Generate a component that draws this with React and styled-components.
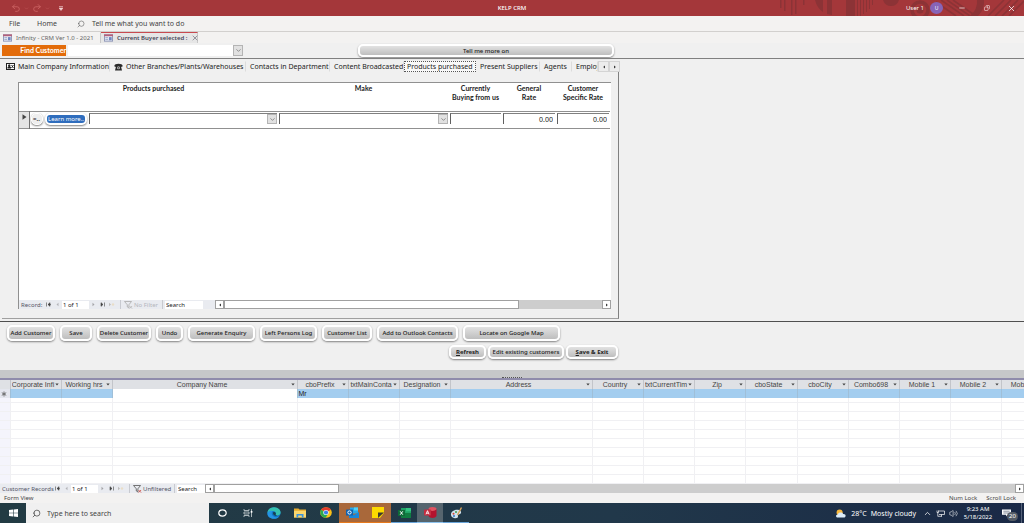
import React from 'react';
import styled, { createGlobalStyle } from 'styled-components';
import { Undo2, Redo2, Search, X, Minus, Copy, ChevronDown, ChevronUp, Volume2 } from 'lucide-react';

const columns = [
  { name: 'Corporate Infi', width: 51 },
  { name: 'Working hrs', width: 51 },
  { name: 'Company Name', width: 185, editing: true },
  { name: 'cboPrefix', width: 51, value: 'Mr' },
  { name: 'txtMainConta', width: 51 },
  { name: 'Designation', width: 51 },
  { name: 'Address', width: 142 },
  { name: 'Country', width: 51 },
  { name: 'txtCurrentTim', width: 51 },
  { name: 'Zip', width: 51 },
  { name: 'cboState', width: 52 },
  { name: 'cboCity', width: 51 },
  { name: 'Combo698', width: 51 },
  { name: 'Mobile 1', width: 51 },
  { name: 'Mobile 2', width: 51 },
  { name: 'Mobile 3', width: 51 },
];

const actions = [
  { label: 'Add Customer', width: 48 },
  { label: 'Save', width: 32 },
  { label: 'Delete Customer', width: 54 },
  { label: 'Undo', width: 27 },
  { label: 'Generate Enquiry', width: 67 },
  { label: 'Left Persons Log', width: 57 },
  { label: 'Customer List', width: 50 },
  { label: 'Add to Outlook Contacts', width: 81 },
  { label: 'Locate on Google Map', width: 97 },
];

const blankRows = Array.from({ length: 10 }, (_, i) => i);

const FormIcon = () => (
  <svg width="9" height="8" viewBox="0 0 10 8" aria-hidden="true">
    <rect x="0.5" y="0.5" width="9" height="7" fill="#e8ecf6" stroke="#8a93b5" />
    <rect x="0" y="0" width="10" height="2" fill="#b4607b" />
    <rect x="1.5" y="3" width="3" height="1.2" fill="#a5b0d0" />
    <rect x="1.5" y="5" width="3" height="1.2" fill="#a5b0d0" />
    <rect x="5.5" y="3" width="3" height="3.5" fill="#6f86c0" />
  </svg>
);

const CardIcon = () => (
  <svg width="9" height="7" viewBox="0 0 9 7" aria-hidden="true">
    <rect x="0.5" y="0.5" width="8" height="6" fill="#fff" stroke="#222" />
    <path d="M1.500 5.500V4.200L2.500 3.500a1.200 1.200 0 1 1 1.500 0l1 0.700v1.300z" fill="#222" />
    <path d="M5.500 2l2 3M7.500 2l-2 3" stroke="#222" strokeWidth="0.9" />
  </svg>
);

const PhoneIcon = () => (
  <svg width="9" height="8" viewBox="0 0 9 8" aria-hidden="true">
    <path d="M0.3 3.200C0.3 0 8.700 0 8.700 3.200L7.500 4 7 3.500l1 4H1l1-4L1.500 4z" fill="#2a2a2a" />
    <circle cx="4.5" cy="4.800" r="1.500" fill="#bbb" />
    <circle cx="4.5" cy="4.800" r="0.600" fill="#222" />
  </svg>
);

const Filter = ({ active }) => (
  <svg width="9" height="8" viewBox="0 0 9 8" aria-hidden="true">
    <path d="M0.5 0.5h7L4.9 3.8V7L3.3 6V3.8z" fill="none" stroke={active ? '#555' : '#aaa'} strokeWidth="0.8" />
    <path d="M5.5 5l2.6 2.6M8.1 5L5.5 7.6" stroke={active ? '#d0574f' : '#bbb'} strokeWidth="0.9" />
  </svg>
);

const NavGlyph = ({ type }) => (
  <svg width="7" height="5" viewBox="0 0 7 5" aria-hidden="true">
    {type === 'first' && <path d="M1.5 0.5v4M3 2.5h3M5 0.7L3 2.5l2 1.8z" stroke="#444" fill="#444" strokeWidth="0.6" />}
    {type === 'prev' && <path d="M4.5 0.7L2.5 2.5l2 1.8z" fill="#b4b4b8" />}
    {type === 'next' && <path d="M2.5 0.7l2 1.8-2 1.8z" fill="#a4a4a8" />}
    {type === 'last' && <path d="M5.5 0.5v4M2 0.7l2 1.8-2 1.8z" stroke="#444" fill="#444" strokeWidth="0.6" />}
    {type === 'new' && (
      <>
        <path d="M1 0.7l2 1.8-2 1.8z" fill="#bbb" />
        <circle cx="5" cy="2.5" r="1.2" fill="#e9ddc8" />
      </>
    )}
  </svg>
);

const Arrow = ({ left }) => (
  <svg width="4" height="4" viewBox="0 0 4 4" aria-hidden="true">
    <path d={left ? 'M3 0.4L1.2 2l1.8 1.6z' : 'M1 0.4L2.8 2 1 3.6z'} fill="#333" />
  </svg>
);

const RowMarker = () => (
  <svg width="5" height="6" viewBox="0 0 5 6" aria-hidden="true">
    <path d="M0.500 0.200L4.500 3 0.500 5.800z" fill="#444" />
  </svg>
);

const Circuit = () => (
  <svg width="248" height="16" viewBox="0 0 248 16" aria-hidden="true">
    <g fill="#8c3336">
      <rect x="4" width="1.5" height="8" />
      <rect x="8" width="1.5" height="11" />
      <rect x="15" width="1.5" height="15" />
      <rect x="19" width="1.5" height="14" />
      <rect x="27" width="1.5" height="5" />
      <path d="M39 0h8v12q-6-4-8-12zM51 0h5v15l-5-1zM70 0h9v16h-9zM81 0h1v16h-1zM84 0h1v16h-1zM87 0h1v14h-1zM90 0h1v12h-1zM93 0h1v9h-1zM96 0h1v5h-1z" />
      <path d="M107 0h16q-2 6-8 6t-8-6z" />
      <circle cx="144" cy="10" r="3.5" />
      <path d="M201 0h7q1 9-6 16h-8q8-7 7-16z" />
    </g>
    <circle cx="144" cy="10" r="8" fill="none" stroke="#8c3336" strokeWidth="3.5" />
    <path d="M160 2l20 14M165 0l23 16M171 0l23 16M177 0l20 14M212 16l16-16M219 16l16-16M226 16l16-16M233 16l15-15" stroke="#8c3336" strokeWidth="1.6" />
  </svg>
);

const RecordNav = ({ label, filter, filtered, labelWidth }) => (
  <Navigator>
    <NavLabel $width={labelWidth}>{label}</NavLabel>
    <NavButton aria-label="First record"><NavGlyph type="first" /></NavButton>
    <NavButton aria-label="Previous record"><NavGlyph type="prev" /></NavButton>
    <NavInput aria-label="Current record" defaultValue="1 of 1" $width={27} />
    <NavButton aria-label="Next record"><NavGlyph type="next" /></NavButton>
    <NavButton aria-label="Last record"><NavGlyph type="last" /></NavButton>
    <NavButton aria-label="New record"><NavGlyph type="new" /></NavButton>
    <FilterButton $active={filtered}>
      <Filter active={filtered} />
      {filter}
    </FilterButton>
    <NavInput aria-label="Search records" defaultValue="Search" $width={filtered ? 28 : 38} />
  </Navigator>
);

const ScrollBar = ({ thumb }) => (
  <Track>
    <ScrollButton aria-label="Scroll left"><Arrow left /></ScrollButton>
    <Thumb $width={thumb} />
    <Spacer />
    <ScrollButton aria-label="Scroll right"><Arrow /></ScrollButton>
  </Track>
);

const Dropdown = ({ label, width }) => (
  <Combo $width={width}>
    <Select aria-label={label} defaultValue="">
      <option value=""></option>
    </Select>
    <ComboArrow><ChevronDown size={7} /></ComboArrow>
  </Combo>
);

const App = () => {
  return (
    <Window>
      <GlobalStyle />
      <TitleBar>
        <QuickAccess>
          <Undo2 size={10} color="#cc6464" />
          <ChevronDown size={5} color="#cc6464" />
          <Redo2 size={10} color="#cc6464" />
          <ChevronDown size={5} color="#cc6464" />
          <QuickMore>
            <svg width="4" height="5" viewBox="0 0 4 5"><path d="M0 0.500h4M0 2h4L2 4.500z" fill="#f0d0d0" stroke="#f0d0d0" strokeWidth="0.600" /></svg>
          </QuickMore>
        </QuickAccess>
        <AppName>KELP CRM</AppName>
        <TitleRight>
          <Pattern><Circuit /></Pattern>
          <User>User 1</User>
          <Avatar>U</Avatar>
          <WindowButton aria-label="Minimize"><Minus size={8} /></WindowButton>
          <WindowButton aria-label="Restore"><Flipped><Copy size={6} /></Flipped></WindowButton>
          <WindowButton aria-label="Close"><X size={9} /></WindowButton>
        </TitleRight>
      </TitleBar>

      <Ribbon>
        <RibbonTab $width={28}>File</RibbonTab>
        <RibbonTab $width={36}>Home</RibbonTab>
        <TellMe>
          <Flipped><Search size={8} strokeWidth={1.5} /></Flipped>
          <span>Tell me what you want to do</span>
        </TellMe>
      </Ribbon>

      <DocTabs>
        <DocTab $width={101}>
          <FormIcon />
          Infinity - CRM Ver 1.0 - 2021
        </DocTab>
        <DocTab $width={97} $active>
          <FormIcon />
          Current Buyer selected :
          <X size={8} strokeWidth={1.5} />
        </DocTab>
      </DocTabs>

      <FindRow>
        <FindLabel>Find Customer</FindLabel>
        <Dropdown label="Find Customer" width={175} />
        <TellMore>Tell me more on</TellMore>
      </FindRow>

      <Pages>
        <TabStrip>
          <PageTab $width={108}><CardIcon />Main Company Information</PageTab>
          <PageTab $width={136}><PhoneIcon />Other Branches/Plants/Warehouses</PageTab>
          <PageTab $width={84}>Contacts in Department</PageTab>
          <PageTab $width={74}>Content Broadcasted</PageTab>
          <PageTab $width={72} $active>Products purchased</PageTab>
          <PageTab $width={64}>Present Suppliers</PageTab>
          <PageTab $width={32}>Agents</PageTab>
          <PageTab $width={26}>Employees</PageTab>
          <TabScroll aria-label="Previous tabs"><Arrow left /></TabScroll>
          <TabScroll aria-label="Next tabs"><Arrow /></TabScroll>
        </TabStrip>
        <Page>
          <Subform>
            <ProductTable>
              <colgroup>
                <Col $width={10} />
                <Col $width={15} />
                <Col $width={44} />
                <Col $width={190} />
                <Col $width={171} />
                <Col $width={53} />
                <Col $width={54} />
                <Col $width={54} />
              </colgroup>
              <thead>
                <tr>
                  <ProductHead />
                  <ProductHead colSpan={3}>Products purchased</ProductHead>
                  <ProductHead>Make</ProductHead>
                  <ProductHead>Currently<br />Buying from us</ProductHead>
                  <ProductHead>General<br />Rate</ProductHead>
                  <ProductHead>Customer<br />Specific Rate</ProductHead>
                </tr>
              </thead>
              <tbody>
                <ProductRow>
                  <Selector><RowMarker /></Selector>
                  <td><TinyButton>=..</TinyButton></td>
                  <td><LearnMore>Learn more..</LearnMore></td>
                  <td><Dropdown label="Product purchased" /></td>
                  <td><Dropdown label="Make" /></td>
                  <td><Field aria-label="Currently buying from us" /></td>
                  <td><Field aria-label="General rate" defaultValue="0.00" /></td>
                  <td><Field aria-label="Customer specific rate" defaultValue="0.00" /></td>
                </ProductRow>
              </tbody>
            </ProductTable>
            <Spacer />
            <NavRow>
              <RecordNav label="Record:" labelWidth={25} filter="No Filter" />
              <NavGap />
              <ScrollBar thumb={295} />
            </NavRow>
          </Subform>
        </Page>
      </Pages>

      <Footer>
        <ActionRow>
          {actions.map((a) => (
            <FormButton key={a.label} $width={a.width}>{a.label}</FormButton>
          ))}
        </ActionRow>
        <ExitRow>
          <FormButton $width={37} $bold><span><u>R</u>efresh</span></FormButton>
          <FormButton $width={76}>Edit existing customers</FormButton>
          <FormButton $width={52} $bold><span><u>S</u>ave &amp; Exit</span></FormButton>
        </ExitRow>
      </Footer>

      <Splitter><Grip /></Splitter>

      <Datasheet>
        <Grid>
          <colgroup>
            <Col $width={10} />
            {columns.map((c) => <Col key={c.name} $width={c.width} />)}
          </colgroup>
          <thead>
            <tr>
              <GridHead />
              {columns.map((c) => (
                <GridHead key={c.name}>
                  <HeadInner>
                    <HeadText>{c.name}</HeadText>
                    <svg width="4" height="3" viewBox="0 0 4 3" aria-hidden="true"><path d="M0.300 0.500h3.400L2 2.500z" fill="#444" /></svg>
                  </HeadInner>
                </GridHead>
              ))}
            </tr>
          </thead>
          <tbody>
            <tr>
              <NewCell $selector>
                <svg width="6" height="6" viewBox="0 0 6 6" aria-label="New record"><path d="M3 0.500v5M0.800 1.700l4.400 2.600M5.200 1.700L0.800 4.300" stroke="#666" strokeWidth="0.900" /></svg>
              </NewCell>
              {columns.map((c) => (
                <NewCell key={c.name} $editing={c.editing}>{c.value}</NewCell>
              ))}
            </tr>
            {blankRows.map((r) => (
              <tr key={r}>
                <BlankCell $selector />
                {columns.map((c) => <BlankCell key={c.name} />)}
              </tr>
            ))}
          </tbody>
        </Grid>
      </Datasheet>
      <NavRow>
        <RecordNav label="Customer Records" labelWidth={53} filter="Unfiltered" filtered />
        <ScrollBar thumb={125} />
      </NavRow>

      <StatusBar>
        <span>Form View</span>
        <Spacer />
        <span>Num Lock</span>
        <span>Scroll Lock</span>
      </StatusBar>

      <Taskbar>
        <TaskButton aria-label="Start">
          <svg width="9" height="8" viewBox="0 0 9 8"><path d="M0 1l4-0.6v3.3H0zM4.6 0.4L9 0v3.7H4.6zM0 4.3h4v3.3L0 7zM4.6 4.3H9V8l-4.4-0.4z" fill="#fff" /></svg>
        </TaskButton>
        <TaskSearch>
          <Flipped><Search size={9} strokeWidth={2} /></Flipped>
          <TaskInput aria-label="Search" placeholder="Type here to search" />
        </TaskSearch>
        <TaskButton aria-label="Cortana">
          <svg width="9" height="8" viewBox="0 0 9 8"><ellipse cx="4.500" cy="4" rx="3.700" ry="3.200" fill="none" stroke="#fff" strokeWidth="1.2" /></svg>
        </TaskButton>
        <TaskButton aria-label="Task view">
          <svg width="10" height="8" viewBox="0 0 10 8">
            <path d="M1 0v1.5h5V0M1 8V6.5h5V8M1 3h5v2H1zM8.5 0v8" fill="none" stroke="#ccd3d6" strokeWidth="0.8" />
            <rect x="7.7" y="2" width="1.7" height="1.7" fill="#fff" />
          </svg>
        </TaskButton>
        <TaskButton aria-label="Edge">
          <svg width="14" height="12" viewBox="0 0 14 12">
            <ellipse cx="7" cy="6" rx="6.6" ry="5.8" fill="#1173c7" />
            <path d="M0.4 6C0.6 2.5 3.5 0.2 7 0.2c4 0 6.6 2.6 6.6 5.3 0 2-1.8 3-3.6 3-1.4 0-1.9-0.5-1.2-1.4C9.600 5.500 8 3.900 6 3.900 3.500 3.900 1.300 4.600 0.400 6z" fill="#35c1b0" />
            <path d="M0.4 6.500C0.700 4 4 3.200 5.800 4.200 4 5 4.200 9 8 10c2 0.500 3.800 0 4.600-1-1.400 2.400-4.200 3-6 2.800C3 11.600 0.300 9.500 0.400 6.500z" fill="#2494e4" />
            <path d="M6.200 5.200c1.600-0.800 3 0.400 2.600 1.900-0.600 0.900 0.200 1.400 1.500 1.500-2 0.800-5-1-4.100-3.400z" fill="#17404f" />
          </svg>
        </TaskButton>
        <TaskButton aria-label="File Explorer">
          <svg width="12" height="10" viewBox="0 0 12 10">
            <path d="M0 0.500h4.500l1 1H12V9.500H0z" fill="#e8ab2e" />
            <path d="M0 2.800h12v6.700H0z" fill="#fbd66d" />
            <path d="M2.500 9.500V6h7v3.500H7.800V7.500H4.200v2z" fill="#3b92dc" />
          </svg>
        </TaskButton>
        <TaskButton aria-label="Chrome">
          <svg width="12" height="11" viewBox="0 0 12 11">
            <ellipse cx="6" cy="5.500" rx="5.800" ry="5.300" fill="#fbc116" />
            <path d="M6 5.500L1 2.800C3-0.500 9-0.500 11 2.800z" fill="#e33b2e" />
            <path d="M6 5.500L1 2.800C-0.800 6 1 10.300 5.500 10.800L8.500 6.500z" fill="#2da94f" />
            <ellipse cx="6" cy="5.500" rx="2.700" ry="2.500" fill="#fff" />
            <ellipse cx="6" cy="5.500" rx="2.100" ry="1.900" fill="#3c7de6" />
          </svg>
        </TaskButton>
        <TaskButton aria-label="Outlook" $bg="#a9683a" $line="#e77a1d">
          <svg width="13" height="11" viewBox="0 0 13 11">
            <rect x="4" y="0.500" width="8" height="6" fill="#28a8ea" />
            <rect x="8" y="0.500" width="4" height="3" fill="#50d0f5" />
            <path d="M3 5l5 3 5-3v6H3z" fill="#1a86d9" />
            <rect x="0" y="2.500" width="7" height="6" rx="0.600" fill="#0f62b0" />
            <ellipse cx="3.500" cy="5.500" rx="1.700" ry="1.600" fill="none" stroke="#fff" />
          </svg>
        </TaskButton>
        <TaskButton aria-label="Sticky Notes" $bg="#a9683a" $line="#e77a1d">
          <svg width="12" height="11" viewBox="0 0 12 11">
            <path d="M0 0h12v6L8 11H0z" fill="#fdd900" />
            <path d="M6 5.500h6L6 11z" fill="#3d3a2e" />
          </svg>
        </TaskButton>
        <TaskButton aria-label="Excel" $line="#6aa5da">
          <svg width="13" height="10" viewBox="0 0 13 10">
            <rect x="3" width="10" height="10" fill="#21a366" />
            <path d="M8 0h5v3.300H8z" fill="#33c481" />
            <path d="M3 5h10v5H3z" fill="#107c41" />
            <rect y="2" width="7" height="6" fill="#0e6b38" />
            <path d="M2.200 3.300l2.600 3.400M4.800 3.300L2.200 6.700" stroke="#fff" />
          </svg>
        </TaskButton>
        <TaskButton aria-label="Access" $bg="#56656e" $line="#8ec3ee">
          <svg width="13" height="11" viewBox="0 0 13 11">
            <ellipse cx="8.500" cy="2" rx="4" ry="2" fill="#e05461" />
            <path d="M4.500 2c1 2.500 7 2.500 8 0v7c-1 2.500-7 2.500-8 0z" fill="#b3122e" />
            <rect y="2.500" width="7" height="6" rx="0.600" fill="#c42d40" />
            <path d="M2 7.300l1.500-3.600L5 7.300M2.600 6.200h1.800" fill="none" stroke="#fff" strokeWidth="0.900" />
          </svg>
        </TaskButton>
        <TaskButton aria-label="Paint" $line="#6aa5da">
          <svg width="13" height="12" viewBox="0 0 13 12">
            <path d="M1 8C0.500 4.500 5 1.800 9 3c3 1 2.500 4 0.500 4.200-1.500 0.200-1.800 0.800-1.500 2C8.300 11 6 11.500 4 11 2.300 10.500 1.200 9.500 1 8z" fill="#cfe3ef" />
            <circle cx="3.500" cy="6.800" r="1" fill="#d9483b" />
            <circle cx="6" cy="5" r="1" fill="#3b9a52" />
            <circle cx="4" cy="9" r="1" fill="#3576c4" />
            <path d="M11.500 0.500L7.500 8" stroke="#dba45b" strokeWidth="1.400" />
          </svg>
        </TaskButton>
        <Spacer />
        <Tray>
          <svg width="12" height="9" viewBox="0 0 13 9" aria-hidden="true">
            <circle cx="5" cy="3.500" r="3.300" fill="#f9b93e" />
            <path d="M3 8.800C0.500 8.800 0.500 5.500 3 5.500 3.800 2.800 8 2.800 8.800 5c3.500-0.400 3.500 3.800 0.700 3.800z" fill="#dcecf9" />
          </svg>
          <Weather>28°C</Weather>
          <Weather>Mostly cloudy</Weather>
          <TrayIcons>
            <ChevronUp size={9} />
            <svg width="9" height="7" viewBox="0 0 9 7" aria-hidden="true">
              <path d="M2.500 1h6v3.500H3M1 0.500v2h1.500v-2M1.800 2.500v3.800H6M5.500 4.500v1.800" fill="none" stroke="#fff" strokeWidth="0.700" />
            </svg>
            <Volume2 size={9} strokeWidth={1.5} />
          </TrayIcons>
          <Clock>
            <span>9:23 AM</span>
            <span>5/18/2022</span>
          </Clock>
          <Notice aria-label="20 notifications">
            <svg width="9" height="8" viewBox="0 0 10 8" aria-hidden="true">
              <path d="M0 0h10v6H6L4.500 8V6H0z" fill="#fff" />
              <path d="M1.500 2h7M1.500 4h7" stroke="#1a2b45" strokeWidth="0.600" />
            </svg>
            <Count>20</Count>
          </Notice>
        </Tray>
      </Taskbar>
    </Window>
  );
};

export default App;

const GlobalStyle = createGlobalStyle`
  * {
    box-sizing: border-box;
  }
  body {
    margin: 0;
    background: #f0f0f0;
    color: #222222;
    font-family: "Noto Sans", "Open Sans", sans-serif;
    font-size: 7px;
    line-height: 9px;
  }
  button, input, select {
    font: inherit;
    color: inherit;
    margin: 0;
    padding: 0;
    border: 0;
    background: none;
    border-radius: 0;
  }
  svg {
    flex: none;
    display: block;
  }
`;

const Window = styled.div`
  display: flex;
  flex-direction: column;
  min-height: 100vh;
  overflow: hidden;
`;

const Spacer = styled.div`
  flex: 1;
`;

const TitleBar = styled.header`
  height: 16px;
  display: grid;
  grid-template-columns: 1fr auto 1fr;
  align-items: center;
  background: #a4373a;
  color: #ffffff;
  font-size: 6px;
`;

const QuickAccess = styled.div`
  display: flex;
  align-items: center;
  gap: 3px;
  padding-left: 11px;
`;

const QuickMore = styled.span`
  margin-left: 6px;
`;

const AppName = styled.span`
  font-weight: 500;
`;

const TitleRight = styled.div`
  position: relative;
  height: 16px;
  display: flex;
  align-items: center;
  justify-content: flex-end;
`;

const Pattern = styled.div`
  position: absolute;
  top: 0;
  right: 0;
`;

const User = styled.span`
  position: relative;
  margin-right: 6px;
`;

const Avatar = styled.span`
  position: relative;
  width: 13px;
  height: 12px;
  border-radius: 50%;
  background: #8764b8;
  font-size: 5px;
  line-height: 12px;
  text-align: center;
  margin-right: 6px;
`;

const WindowButton = styled.button`
  position: relative;
  width: 25px;
  height: 16px;
  display: flex;
  align-items: center;
  justify-content: center;
`;

const Ribbon = styled.nav`
  height: 16px;
  display: flex;
  align-items: center;
  background: #f3f2f1;
  border-bottom: 1px solid #d2d0ce;
  color: #444444;
  padding-left: 9px;
`;

const RibbonTab = styled.button`
  width: ${(p) => p.$width}px;
  text-align: left;
`;

const TellMe = styled.button`
  display: flex;
  align-items: center;
  gap: 7px;
  margin-left: 4px;
`;

const Flipped = styled.span`
  transform: scaleX(-1);
`;

const DocTabs = styled.div`
  height: 11px;
  display: flex;
  background: #f3f2f1;
  font-size: 6px;
`;

const DocTab = styled.button`
  width: ${(p) => p.$width}px;
  display: flex;
  align-items: center;
  gap: 4px;
  padding: 0 3px;
  white-space: nowrap;
  line-height: 8px;
  color: ${(p) => (p.$active ? '#444455' : '#666666')};
  font-weight: ${(p) => (p.$active ? 600 : 400)};
  background: ${(p) => (p.$active ? '#e6e6e6' : 'transparent')};
  border-top: ${(p) => (p.$active ? '1px solid #c84a50' : '1px solid transparent')};
  border-right: 1px solid #c8c8c8;
`;

const FindRow = styled.div`
  height: 15px;
  display: flex;
  align-items: center;
  gap: 2px;
  padding-left: 2px;
`;

const FindLabel = styled.span`
  width: 64px;
  height: 11px;
  background: #e36c0a;
  color: #ffffff;
  font-family: "Lato", sans-serif;
  font-weight: 700;
  line-height: 10px;
  text-align: right;
`;

const Combo = styled.span`
  display: flex;
  width: ${(p) => (p.$width ? p.$width + 'px' : 'auto')};
  height: 11px;
  background: #ffffff;
`;

const Select = styled.select`
  appearance: none;
  flex: 1;
  min-width: 0;
`;

const ComboArrow = styled.span`
  width: 10px;
  display: flex;
  align-items: center;
  justify-content: center;
  background: #e1e1e1;
  border: 1px solid #b4b4b4;
  color: #555555;
  pointer-events: none;
`;

const ShadowButton = styled.button`
  background: linear-gradient(#e2e2e2, #bebebe);
  border: 2px solid #ffffff;
  border-radius: 5px;
  box-shadow: 0 1px 2px #808080;
  font-size: 6px;
  font-weight: 500;
  line-height: 8px;
  white-space: nowrap;
`;

const TellMore = styled(ShadowButton)`
  width: 256px;
  height: 13px;
  margin-left: 113px;
`;

const Pages = styled.main`
  border-top: 1px solid #808080;
  border-bottom: 1px solid #505050;
  padding: 2px 0 2px 2px;
`;

const TabStrip = styled.div`
  display: flex;
  height: 11px;
`;

const PageTab = styled.button`
  width: ${(p) => p.$width}px;
  display: flex;
  align-items: center;
  gap: 3px;
  padding-left: 3px;
  overflow: hidden;
  white-space: nowrap;
  border: 1px solid transparent;
  border-right-color: #dcdcdc;
  ${(p) => p.$active && 'background: #f9f9f9; border: 1px dotted #555555; padding-left: 2px;'}
`;

const TabScroll = styled.button`
  width: 11px;
  display: flex;
  align-items: center;
  justify-content: center;
  background: #ececec;
  border: 1px solid #d4d4d4;
`;

const Page = styled.section`
  width: 617px;
  border-right: 1px solid #808080;
  border-bottom: 1px solid #a0a0a0;
  padding: 10px 7px 9px 16px;
`;

const Subform = styled.div`
  display: flex;
  flex-direction: column;
  min-height: 227px;
  background: #ffffff;
  border-top: 1px solid #909090;
  border-left: 1px solid #909090;
`;

const Col = styled.col`
  width: ${(p) => p.$width}px;
`;

const ProductTable = styled.table`
  width: 591px;
  table-layout: fixed;
  border-collapse: collapse;

  td {
    padding: 0 1px 2px;
    vertical-align: middle;
  }
`;

const ProductHead = styled.th`
  height: 28px;
  padding: 1px 0 0;
  vertical-align: top;
  font-family: "Lato", sans-serif;
  font-weight: 700;
  white-space: nowrap;
`;

const ProductRow = styled.tr`
  height: 17px;
  border-top: 1px solid #909090;
  border-bottom: 1px solid #909090;

  ${Combo}, input {
    border-top: 1px solid #808080;
    border-left: 1px solid #606060;
  }
`;

const Selector = styled.th`
  padding: 2px 0 0 3px;
  vertical-align: top;
  background: #e4e4e4;
  border-right: 1px solid #707070;
`;

const TinyButton = styled(ShadowButton)`
  display: block;
  width: 12px;
  height: 12px;
  border-width: 1px;
  background: #eeeeee;
  font-weight: 700;
`;

const LearnMore = styled(ShadowButton)`
  display: block;
  width: 42px;
  height: 12px;
  background: #2f6dbd;
  color: #ffffff;
  font-weight: 400;
`;

const Field = styled.input`
  display: block;
  width: 100%;
  height: 11px;
  padding-right: 2px;
  text-align: right;
`;

const NavRow = styled.div`
  display: flex;
  height: 9px;
  background: #e9ebf0;
`;

const NavGap = styled.div`
  width: 12px;
`;

const Navigator = styled.div`
  display: flex;
  align-items: center;
  font-size: 6px;
  line-height: 8px;
`;

const NavLabel = styled.span`
  width: ${(p) => p.$width}px;
  padding-left: 2px;
  color: #555566;
  white-space: nowrap;
`;

const NavButton = styled.button`
  width: 9px;
  height: 9px;
  display: flex;
  align-items: center;
  justify-content: center;
`;

const NavInput = styled.input`
  width: ${(p) => p.$width}px;
  height: 8px;
  padding-left: 1px;
  background: #ffffff;
`;

const FilterButton = styled.button`
  display: flex;
  align-items: center;
  width: ${(p) => (p.$active ? 46 : 43)}px;
  height: 9px;
  margin: 0 2px 0 4px;
  padding-left: 3px;
  gap: 1px;
  white-space: nowrap;
  color: ${(p) => (p.$active ? '#555566' : '#b4b6bc')};
  border-left: 1px solid #c8cad0;
  border-right: 1px solid #c8cad0;
`;

const Track = styled.div`
  flex: 1;
  display: flex;
  background: #cdcdcd;
`;

const ScrollButton = styled.button`
  width: 9px;
  display: flex;
  align-items: center;
  justify-content: center;
  background: #ffffff;
  border: 1px solid #a0a0a0;
`;

const Thumb = styled.div`
  width: ${(p) => p.$width}px;
  background: #ffffff;
  border: 1px solid #a0a0a0;
`;

const Footer = styled.section`
  height: 48px;
  padding-top: 3px;
`;

const ActionRow = styled.div`
  display: flex;
  gap: 5px;
  padding-left: 7px;
`;

const FormButton = styled(ShadowButton)`
  width: ${(p) => p.$width}px;
  height: 16px;
  font-weight: ${(p) => (p.$bold ? 700 : 500)};
`;

const ExitRow = styled.div`
  display: flex;
  gap: 2px;
  padding: 4px 0 0 449px;

  ${FormButton} {
    height: 14px;
  }
`;

const Splitter = styled.div`
  height: 10px;
  display: flex;
  align-items: flex-end;
  justify-content: center;
  background: #c6c7c9;
  border-bottom: 2px solid #8f8bab;
`;

const Grip = styled.span`
  width: 20px;
  border-top: 1px dotted #555555;
`;

const Datasheet = styled.div`
  flex: 1 0 104px;
  display: flex;
  overflow: hidden;
  background: #ffffff;
  font-family: "Liberation Sans", Arial, sans-serif;
`;

const Grid = styled.table`
  width: 1052px;
  flex: none;
  table-layout: fixed;
  border-collapse: collapse;
  line-height: 8px;
`;

const GridHead = styled.th`
  height: 9px;
  padding: 0;
  font-weight: 400;
  color: #444444;
  background: #dfe1e5;
  border-right: 1px solid #c3c5ca;
`;

const HeadInner = styled.span`
  display: flex;
  align-items: center;
  padding: 0 2px 0 1px;
`;

const HeadText = styled.span`
  flex: 1;
  overflow: hidden;
  white-space: nowrap;
`;

const NewCell = styled.td`
  height: 9px;
  padding: 0 1px;
  line-height: 8px;
  background: ${(p) => (p.$selector ? '#e4e6ee' : p.$editing ? '#ffffff' : '#a3cdef')};
  border-right: 1px solid #9fbfd8;
`;

const BlankCell = styled.td`
  padding: 0;
  background: ${(p) => (p.$selector ? '#f4f4fc' : '#ffffff')};
  border-right: 1px solid #f0f0f3;
  border-bottom: 1px solid #f0f0f3;
`;

const StatusBar = styled.footer`
  height: 10px;
  display: flex;
  align-items: center;
  gap: 9px;
  padding: 0 8px 0 4px;
  background: #f3f2f1;
  color: #444444;
  font-size: 6px;
`;

const Taskbar = styled.footer`
  height: 20px;
  display: flex;
  background: linear-gradient(90deg, #223b43, #21384a 60%, #1a2946);
  color: #ffffff;
`;

const TaskButton = styled.button`
  width: 26px;
  display: flex;
  align-items: center;
  justify-content: center;
  background: ${(p) => p.$bg || 'transparent'};
  border-bottom: 1px solid ${(p) => p.$line || 'transparent'};
`;

const TaskSearch = styled.label`
  width: 183px;
  display: flex;
  align-items: center;
  gap: 6px;
  padding-left: 6px;
  background: #f0f0f0;
  color: #444444;
`;

const TaskInput = styled.input`
  flex: 1;
  min-width: 0;

  &::placeholder {
    color: #444444;
    opacity: 1;
  }
`;

const Tray = styled.div`
  display: flex;
  align-items: center;
  gap: 4px;
  padding-right: 2px;
`;

const Weather = styled.span`
  white-space: nowrap;
`;

const TrayIcons = styled.span`
  display: flex;
  align-items: center;
  gap: 4px;
  margin-left: 3px;
`;

const Clock = styled.span`
  width: 32px;
  display: flex;
  flex-direction: column;
  align-items: center;
  font-size: 6px;
  line-height: 8px;
`;

const Notice = styled.button`
  position: relative;
  width: 24px;
  height: 20px;
  padding-left: 4px;
  border-right: 1px solid #56627a;
`;

const Count = styled.span`
  position: absolute;
  right: 3px;
  bottom: 2px;
  width: 11px;
  height: 9px;
  border-radius: 5px;
  background: #555c66;
  font-size: 6px;
  line-height: 9px;
`;
